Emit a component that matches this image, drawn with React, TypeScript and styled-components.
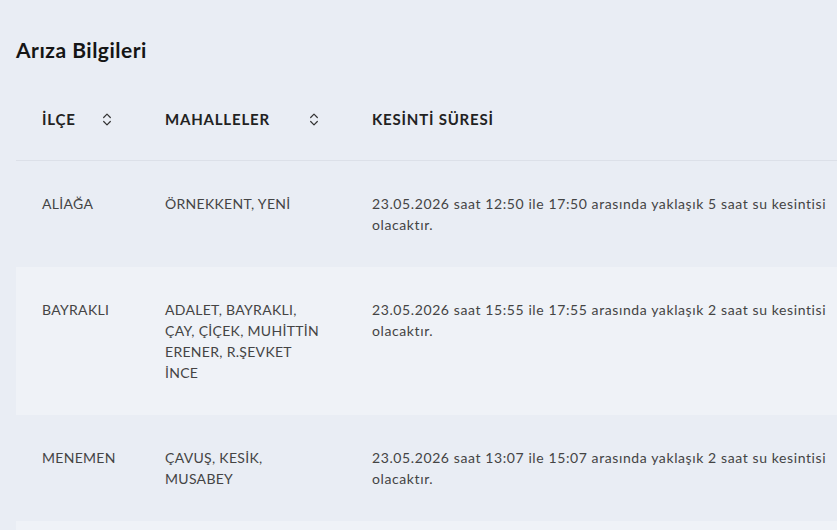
import React from "react";
import styled, { createGlobalStyle } from "styled-components";

const GlobalStyle = createGlobalStyle`
  html, body {
    margin: 0;
    padding: 0;
    background: #e9edf4;
    overflow: hidden;
  }
  body {
    font-family: Lato, "Noto Sans", "Liberation Sans", sans-serif;
  }
`;

const Page = styled.div`
  padding: 36px 0 0 16px;
`;

const Title = styled.h2`
  margin: 0;
  font-size: 21px;
  line-height: 28px;
  font-weight: 700;
  letter-spacing: 0.5px;
  color: #151515;
`;

const Table = styled.table`
  margin-top: 12px;
  border-collapse: collapse;
  table-layout: fixed;
  width: 821px;
`;

const HeadCell = styled.th<{ $w: number }>`
  box-sizing: border-box;
  width: ${(p) => p.$w}px;
  text-align: left;
  padding: 34px 24px 32px 26px;
  border-bottom: 1px solid #dce0e8;
  font-size: 15px;
  line-height: 18px;
  font-weight: 700;
  color: #222;
  letter-spacing: 0.8px;
`;

const HeadInner = styled.div`
  display: flex;
  align-items: center;
  justify-content: space-between;
`;

const SortIcon = styled.svg`
  width: 16px;
  height: 17px;
  flex: none;
  color: #333;
`;

const Row = styled.tr<{ $alt: boolean }>`
  background: ${(p) => (p.$alt ? "#eff2f7" : "transparent")};
`;

const Cell = styled.td<{ $wide?: boolean }>`
  box-sizing: border-box;
  vertical-align: top;
  padding: 32px ${(p) => (p.$wide ? "4px" : "24px")} 32px 26px;
  font-size: 14px;
  line-height: 21px;
  letter-spacing: ${(p) => (p.$wide ? "0.6px" : "0.3px")};
  color: #444;
`;

const Sort = () => (
  <SortIcon viewBox="0 0 24 24" fill="none" stroke="currentColor" strokeWidth={1.8} strokeLinecap="round" strokeLinejoin="round">
    <path d="m7 15 5 5 5-5" />
    <path d="m7 9 5-5 5 5" />
  </SortIcon>
);

const rows = [
  { ilce: "ALİAĞA", mah: "ÖRNEKKENT, YENİ", text: "23.05.2026 saat 12:50 ile 17:50 arasında yaklaşık 5 saat su kesintisi olacaktır." },
  { ilce: "BAYRAKLI", mah: "ADALET, BAYRAKLI, ÇAY, ÇİÇEK, MUHİTTİN ERENER, R.ŞEVKET İNCE", text: "23.05.2026 saat 15:55 ile 17:55 arasında yaklaşık 2 saat su kesintisi olacaktır." },
  { ilce: "MENEMEN", mah: "ÇAVUŞ, KESİK, MUSABEY", text: "23.05.2026 saat 13:07 ile 15:07 arasında yaklaşık 2 saat su kesintisi olacaktır." },
  { ilce: "", mah: "", text: "" },
];

export default function App() {
  return (
    <>
      <GlobalStyle />
      <Page>
        <Title>Arıza Bilgileri</Title>
        <Table>
          <thead>
            <tr>
              <HeadCell $w={123}>
                <HeadInner>
                  <span>İLÇE</span>
                  <Sort />
                </HeadInner>
              </HeadCell>
              <HeadCell $w={207}>
                <HeadInner>
                  <span>MAHALLELER</span>
                  <Sort />
                </HeadInner>
              </HeadCell>
              <HeadCell $w={491}>KESİNTİ SÜRESİ</HeadCell>
            </tr>
          </thead>
          <tbody>
            {rows.map((r, i) => (
              <Row key={i} $alt={i % 2 === 1}>
                <Cell>{r.ilce}</Cell>
                <Cell>{r.mah}</Cell>
                <Cell $wide>{r.text}</Cell>
              </Row>
            ))}
          </tbody>
        </Table>
      </Page>
    </>
  );
}
